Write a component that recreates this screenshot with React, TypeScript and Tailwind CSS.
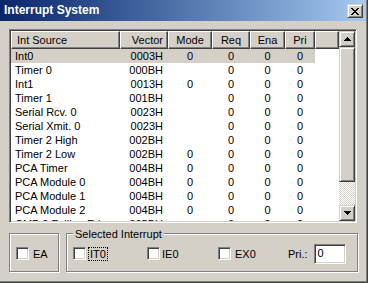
import React from "react";

const raised =
  "border border-t-[#d4d0c8] border-l-[#d4d0c8] border-r-[#404040] border-b-[#404040] shadow-[inset_1px_1px_0_#ffffff,inset_-1px_-1px_0_#808080]";
const sunken =
  "border border-t-[#808080] border-l-[#808080] border-r-white border-b-white shadow-[inset_1px_1px_0_#404040,inset_-1px_-1px_0_#d4d0c8]";
const headerCell =
  "h-full flex items-center border border-t-white border-l-white border-r-[#404040] border-b-[#404040] shadow-[inset_-1px_-1px_0_#808080] bg-[#d4d0c8]";
const etched = "border border-[#808080] shadow-[inset_1px_1px_0_#ffffff,1px_1px_0_#ffffff]";

const rows: string[][] = [
  ["Int0", "0003H", "0", "0", "0", "0"],
  ["Timer 0", "000BH", "", "0", "0", "0"],
  ["Int1", "0013H", "0", "0", "0", "0"],
  ["Timer 1", "001BH", "", "0", "0", "0"],
  ["Serial Rcv. 0", "0023H", "", "0", "0", "0"],
  ["Serial Xmit. 0", "0023H", "", "0", "0", "0"],
  ["Timer 2 High", "002BH", "", "0", "0", "0"],
  ["Timer 2 Low", "002BH", "0", "0", "0", "0"],
  ["PCA Timer", "004BH", "0", "0", "0", "0"],
  ["PCA Module 0", "004BH", "0", "0", "0", "0"],
  ["PCA Module 1", "004BH", "0", "0", "0", "0"],
  ["PCA Module 2", "004BH", "0", "0", "0", "0"],
  ["CMP 0 Falling Edge", "005BH", "", "0", "0", "0"],
];

function UpArrow() {
  return (
    <svg width="7" height="4" viewBox="0 0 7 4" shapeRendering="crispEdges">
      <path d="M3 0h1v1H3z M2 1h3v1H2z M1 2h5v1H1z M0 3h7v1H0z" fill="#000" />
    </svg>
  );
}
function DownArrow() {
  return (
    <svg width="7" height="4" viewBox="0 0 7 4" shapeRendering="crispEdges">
      <path d="M0 0h7v1H0z M1 1h5v1H1z M2 2h3v1H2z M3 3h1v1H3z" fill="#000" />
    </svg>
  );
}
function CloseGlyph() {
  return (
    <svg width="8" height="7" viewBox="0 0 8 7" shapeRendering="crispEdges">
      <path
        d="M0 0h2v1H0z M6 0h2v1H6z M1 1h2v1H1z M5 1h2v1H5z M2 2h4v1H2z M3 3h2v1H3z M2 4h4v1H2z M1 5h2v1H1z M5 5h2v1H5z M0 6h2v1H0z M6 6h2v1H6z"
        fill="#000"
      />
    </svg>
  );
}

function Check() {
  return <div className={`w-[13px] h-[13px] shrink-0 bg-white ${sunken}`} />;
}

export default function App() {
  return (
    <div className="w-[368px] h-[283px] border-r border-b border-[#404040] font-['Liberation_Sans',Arial,sans-serif] text-[11px] text-black">
      <div className="w-full h-full border-r border-b border-[#808080] bg-[#d4d0c8] flex flex-col">
        {/* Title bar */}
        <div className="h-[21px] shrink-0 flex items-start bg-linear-to-r from-[#0a246a] to-[#a6caf0]">
          <div className="flex-1 h-[21px] leading-[21px] pl-[4px] text-white font-bold text-[12px]">
            Interrupt System
          </div>
          <div className={`w-[16px] h-[14px] mt-[4px] mr-[3px] bg-[#d4d0c8] flex items-center justify-center ${raised}`}>
            <CloseGlyph />
          </div>
        </div>

        {/* Body */}
        <div className="flex-1 flex flex-col pl-[9px] pt-[8px]">
          {/* List view */}
          <div className={`w-[348px] h-[194px] p-[1px] bg-white flex ${sunken}`}>
            <div className="w-[328px] h-full flex flex-col overflow-hidden">
              <div className="h-[18px] shrink-0 flex">
                <div className={`w-[109px] pl-[5px] ${headerCell}`}>Int Source</div>
                <div className={`w-[48px] justify-end pr-[4px] ${headerCell}`}>Vector</div>
                <div className={`w-[44px] justify-center ${headerCell}`}>Mode</div>
                <div className={`w-[38px] justify-center ${headerCell}`}>Req</div>
                <div className={`w-[35px] justify-center ${headerCell}`}>Ena</div>
                <div className={`w-[30px] justify-center ${headerCell}`}>Pri</div>
                <div className={`w-[24px] ${headerCell}`} />
              </div>
              {rows.map((r, i) => (
                <div key={i} className="h-[14px] shrink-0 flex leading-[14px] whitespace-nowrap">
                  <div className={`flex ${i === 0 ? "bg-[#d4d0c8]" : ""}`}>
                    <div className="w-[109px] pl-[4px] overflow-hidden">{r[0]}</div>
                    <div className="w-[48px] text-right pr-[5px]">{r[1]}</div>
                    <div className="w-[44px] text-center">{r[2]}</div>
                    <div className="w-[38px] text-center">{r[3]}</div>
                    <div className="w-[35px] text-center">{r[4]}</div>
                    <div className="w-[30px] text-center">{r[5]}</div>
                  </div>
                </div>
              ))}
            </div>
            {/* Scrollbar */}
            <div className="w-[16px] h-full flex flex-col">
              <div className={`w-[16px] h-[16px] shrink-0 bg-[#d4d0c8] flex items-center justify-center ${raised}`}>
                <UpArrow />
              </div>
              <div className={`w-[16px] h-[135px] shrink-0 bg-[#d4d0c8] ${raised}`} />
              <div className="flex-1 bg-[image:repeating-conic-gradient(#d4d0c8_0%_25%,#ffffff_0%_50%)] bg-[length:2px_2px]" />
              <div className={`w-[16px] h-[16px] shrink-0 bg-[#d4d0c8] flex items-center justify-center ${raised}`}>
                <DownArrow />
              </div>
            </div>
          </div>

          {/* Bottom groups */}
          <div className="flex mt-[10px]">
            <div className={`w-[50px] h-[39px] flex items-center pl-[6px] pt-[2px] ${etched}`}>
              <Check />
              <span className="ml-[4px] leading-[14px]">EA</span>
            </div>
            <div className={`relative w-[292px] h-[39px] ml-[7px] flex items-center pl-[6px] pt-[2px] ${etched}`}>
              <span className="absolute left-[6px] top-[-7px] px-[2px] bg-[#d4d0c8] leading-[14px] whitespace-nowrap">
                Selected Interrupt
              </span>
              <div className="w-[74px] flex items-center">
                <Check />
                <span className="ml-[2px] h-[14px] w-[20px] border border-dotted border-black leading-[12px] pl-[1px]">IT0</span>
              </div>
              <div className="w-[71px] flex items-center">
                <Check />
                <span className="ml-[2px] leading-[14px]">IE0</span>
              </div>
              <div className="w-[70px] flex items-center">
                <Check />
                <span className="ml-[4px] leading-[14px]">EX0</span>
              </div>
              <span className="leading-[14px]">Pri.:</span>
              <div className={`ml-[6px] w-[32px] h-[20px] bg-white pl-[3px] flex items-center ${sunken}`}>0</div>
            </div>
          </div>
        </div>
      </div>
    </div>
  );
}
